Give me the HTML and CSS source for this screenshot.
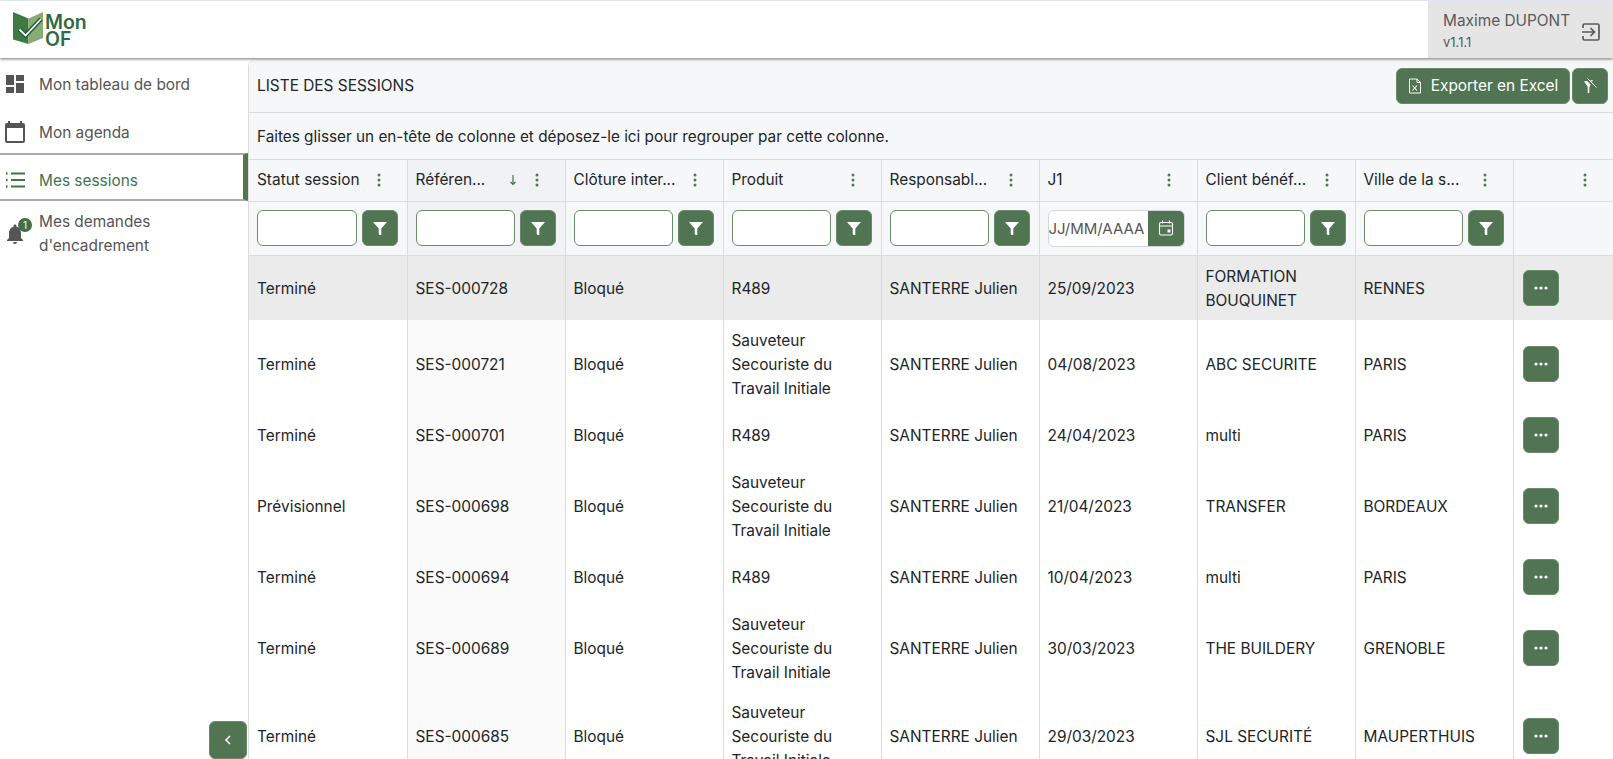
FILE: index.html
```html
<!DOCTYPE html>
<html lang="fr">
  <head>
    <meta charset="UTF-8" />
    <meta name="viewport" content="width=device-width, initial-scale=1.0" />
    <title>Mes sessions</title>
    <link rel="stylesheet" href="styles.css">
  </head>
  <body>

    <svg class="defs" aria-hidden="true">
      <symbol id="i-filter" viewBox="0 0 14 14"><path d="M0 1h14L8.3 7.4V14H6.6L5.7 13V7.4z" fill="currentColor"/></symbol>
      <symbol id="i-dots" viewBox="0 0 4 16"><circle cx="2" cy="3" r="1.5"/><circle cx="2" cy="8" r="1.5"/><circle cx="2" cy="13" r="1.5"/></symbol>
      <symbol id="i-more" viewBox="0 0 14 4"><circle cx="2" cy="2" r="1.6"/><circle cx="7" cy="2" r="1.6"/><circle cx="12" cy="2" r="1.6"/></symbol>
    </svg>

    <header class="topbar">
      <div class="logo">
        <svg width="32" height="34" viewBox="0 0 32 34">
          <path d="M1 0l15.500 6.500V32L1 27.500z" fill="#3f7a45"/>
          <path d="M16.500 6.500L31 0v26l-14.500 6z" fill="#86ab74"/>
          <path d="M7.500 17.500l6 6L29 7" fill="none" stroke="#1f5a33" stroke-width="4.500"/>
          <path d="M7.500 17.500l6 6L29 7" fill="none" stroke="#fff" stroke-width="1.800"/>
        </svg>
        <div class="logo-text">Mon<br>OF</div>
      </div>
      <div class="user">
        <div class="user-text">
          <div class="user-name">Maxime DUPONT</div>
          <div class="user-version">v1.1.1</div>
        </div>
        <svg class="logout" width="20" height="20" viewBox="0 0 20 20" fill="none" stroke="currentColor" stroke-width="1.700">
          <path d="M2 6V3.500A1.500 1.500 0 0 1 3.500 2h13A1.500 1.500 0 0 1 18 3.500v13a1.500 1.500 0 0 1-1.500 1.500h-13A1.500 1.500 0 0 1 2 16.500V14"/>
          <path d="M1 10h12M9.500 6l4 4-4 4"/>
        </svg>
      </div>
    </header>

    <div class="layout">
      <nav class="sidebar">
        <a class="nav-item">
          <svg class="nav-icon" viewBox="0 0 24 24"><path d="M3 13h8V3H3v10zm0 8h8v-6H3v6zm10 0h8V11h-8v10zm0-18v6h8V3h-8z"/></svg>
          <span class="nav-text">Mon tableau de bord</span>
        </a>
        <a class="nav-item">
          <svg class="nav-icon" viewBox="0 0 24 24"><path d="M20 3h-1V1h-2v2H7V1H5v2H4c-1.100 0-2 .9-2 2v16c0 1.100.9 2 2 2h16c1.100 0 2-.9 2-2V5c0-1.100-.9-2-2-2zm0 18H4V8h16v13z"/></svg>
          <span class="nav-text">Mon agenda</span>
        </a>
        <a class="nav-item active">
          <svg class="nav-icon" viewBox="0 0 24 24" fill="none" stroke="currentColor" stroke-width="1.800">
            <path d="M8 5.500h14M8 12h14M8 18.500h14"/>
            <path d="M3 5.500h1.500M3 12h1.500M3 18.500h1.500" stroke-width="2.400"/>
          </svg>
          <span class="nav-text">Mes sessions</span>
        </a>
        <a class="nav-item nav-bell">
          <span class="bell">
            <svg class="nav-icon" viewBox="0 0 24 24"><path d="M12 22c1.100 0 2-.9 2-2h-4c0 1.100.9 2 2 2zm6-6v-5c0-3.070-1.640-5.640-4.500-6.320V4c0-.83-.67-1.500-1.500-1.500s-1.500.67-1.500 1.500v.68C7.630 5.360 6 7.920 6 11v5l-2 2v1h16v-1l-2-2z"/></svg>
            <span class="badge">1</span>
          </span>
          <span class="nav-text">Mes demandes d'encadrement</span>
        </a>
        <button class="btn collapse" type="button">
          <svg width="10" height="12" viewBox="0 0 10 12" fill="none" stroke="currentColor" stroke-width="1.500"><path d="M7 2L3 6l4 4"/></svg>
        </button>
      </nav>

      <main class="content">
        <div class="titlebar">
          <span class="title">LISTE DES SESSIONS</span>
          <div class="actions">
            <button class="btn btn-export" type="button">
              <svg width="14" height="16" viewBox="0 0 14 16" fill="none" stroke="currentColor" stroke-width="1">
                <path d="M1.500 1h7.500l3.500 3.500v10.500h-11zM9 1v3.500h3.500"/>
                <path d="M4.500 7.500l4.500 5M9 7.500l-4.500 5" stroke-width="1.100"/>
              </svg>
              Exporter en Excel
            </button>
            <button class="btn btn-pin" type="button">
              <svg width="16" height="16" viewBox="0 0 16 16" fill="none">
                <path d="M2 3.500L11 2 6.800 10z" fill="currentColor"/>
                <path d="M6.500 8v7" stroke="currentColor" stroke-width="1.500"/>
                <path d="M3.500 -.5l10 10" stroke="#517553" stroke-width="2.600"/>
                <path d="M5.500 .5l9 9" stroke="currentColor" stroke-width="1"/>
              </svg>
            </button>
          </div>
        </div>
        <div class="dropzone">Faites glisser un en-tête de colonne et déposez-le ici pour regrouper par cette colonne.</div>

        <table class="grid">
          <colgroup>
            <col class="col"><col class="col"><col class="col"><col class="col"><col class="col"><col class="col"><col class="col"><col class="col"><col class="col-last">
          </colgroup>
          <thead>
            <tr class="head-row">
              <th><div class="th"><span class="label">Statut session</span><svg class="dots"><use href="#i-dots"/></svg></div></th>
              <th class="sorted"><div class="th"><span class="label">Référen...</span>
                <svg class="sort" width="10" height="14" viewBox="0 0 10 14" fill="none" stroke="currentColor" stroke-width="1.200"><path d="M5 2v9.500M2.500 9L5 11.500 7.500 9"/></svg>
                <svg class="dots"><use href="#i-dots"/></svg></div></th>
              <th><div class="th"><span class="label">Clôture inter...</span><svg class="dots"><use href="#i-dots"/></svg></div></th>
              <th><div class="th"><span class="label">Produit</span><svg class="dots"><use href="#i-dots"/></svg></div></th>
              <th><div class="th"><span class="label">Responsabl...</span><svg class="dots"><use href="#i-dots"/></svg></div></th>
              <th><div class="th"><span class="label">J1</span><svg class="dots"><use href="#i-dots"/></svg></div></th>
              <th><div class="th"><span class="label">Client bénéf...</span><svg class="dots"><use href="#i-dots"/></svg></div></th>
              <th><div class="th"><span class="label">Ville de la s...</span><svg class="dots"><use href="#i-dots"/></svg></div></th>
              <th><div class="th"><span class="label"></span><svg class="dots"><use href="#i-dots"/></svg></div></th>
            </tr>
            <tr class="filter-row">
              <th><div class="filter"><input type="text"><button class="btn btn-filter" type="button"><svg><use href="#i-filter"/></svg></button></div></th>
              <th class="sorted"><div class="filter"><input type="text"><button class="btn btn-filter" type="button"><svg><use href="#i-filter"/></svg></button></div></th>
              <th><div class="filter"><input type="text"><button class="btn btn-filter" type="button"><svg><use href="#i-filter"/></svg></button></div></th>
              <th><div class="filter"><input type="text"><button class="btn btn-filter" type="button"><svg><use href="#i-filter"/></svg></button></div></th>
              <th><div class="filter"><input type="text"><button class="btn btn-filter" type="button"><svg><use href="#i-filter"/></svg></button></div></th>
              <th>
                <div class="date-filter">
                  <input type="text" placeholder="JJ/MM/AAAA">
                  <button class="btn-date" type="button">
                    <svg width="16" height="16" viewBox="0 0 16 16" fill="none" stroke="currentColor" stroke-width="1.100">
                      <rect x="1.500" y="2.500" width="13" height="12.500" rx="1.500"/>
                      <path d="M1.500 6h13M4.500 .5v3M11.500 .5v3"/>
                      <rect x="9.500" y="9.500" width="3" height="3" fill="currentColor" stroke="none"/>
                    </svg>
                  </button>
                </div>
              </th>
              <th><div class="filter"><input type="text"><button class="btn btn-filter" type="button"><svg><use href="#i-filter"/></svg></button></div></th>
              <th><div class="filter"><input type="text"><button class="btn btn-filter" type="button"><svg><use href="#i-filter"/></svg></button></div></th>
              <th></th>
            </tr>
          </thead>
          <tbody>
            <tr class="selected">
              <td>Terminé</td><td class="sorted">SES-000728</td><td>Bloqué</td><td>R489</td><td>SANTERRE Julien</td><td>25/09/2023</td><td>FORMATION BOUQUINET</td><td>RENNES</td>
              <td><button class="btn btn-more" type="button"><svg><use href="#i-more"/></svg></button></td>
            </tr>
            <tr>
              <td>Terminé</td><td class="sorted">SES-000721</td><td>Bloqué</td><td>Sauveteur Secouriste du Travail Initiale</td><td>SANTERRE Julien</td><td>04/08/2023</td><td>ABC SECURITE</td><td>PARIS</td>
              <td><button class="btn btn-more" type="button"><svg><use href="#i-more"/></svg></button></td>
            </tr>
            <tr>
              <td>Terminé</td><td class="sorted">SES-000701</td><td>Bloqué</td><td>R489</td><td>SANTERRE Julien</td><td>24/04/2023</td><td>multi</td><td>PARIS</td>
              <td><button class="btn btn-more" type="button"><svg><use href="#i-more"/></svg></button></td>
            </tr>
            <tr>
              <td>Prévisionnel</td><td class="sorted">SES-000698</td><td>Bloqué</td><td>Sauveteur Secouriste du Travail Initiale</td><td>SANTERRE Julien</td><td>21/04/2023</td><td>TRANSFER</td><td>BORDEAUX</td>
              <td><button class="btn btn-more" type="button"><svg><use href="#i-more"/></svg></button></td>
            </tr>
            <tr>
              <td>Terminé</td><td class="sorted">SES-000694</td><td>Bloqué</td><td>R489</td><td>SANTERRE Julien</td><td>10/04/2023</td><td>multi</td><td>PARIS</td>
              <td><button class="btn btn-more" type="button"><svg><use href="#i-more"/></svg></button></td>
            </tr>
            <tr>
              <td>Terminé</td><td class="sorted">SES-000689</td><td>Bloqué</td><td>Sauveteur Secouriste du Travail Initiale</td><td>SANTERRE Julien</td><td>30/03/2023</td><td>THE BUILDERY</td><td>GRENOBLE</td>
              <td><button class="btn btn-more" type="button"><svg><use href="#i-more"/></svg></button></td>
            </tr>
            <tr>
              <td>Terminé</td><td class="sorted">SES-000685</td><td>Bloqué</td><td>Sauveteur Secouriste du Travail Initiale</td><td>SANTERRE Julien</td><td>29/03/2023</td><td>SJL SECURITÉ</td><td>MAUPERTHUIS</td>
              <td><button class="btn btn-more" type="button"><svg><use href="#i-more"/></svg></button></td>
            </tr>
          </tbody>
        </table>
      </main>
    </div>

  </body>
</html>
```

FILE: styles.css
```css
* {
  box-sizing: border-box;
}

html, body {
  height: 100%;
}

body {
  margin: 0;
  display: flex;
  flex-direction: column;
  height: 759px;
  overflow: hidden;
  font-family: Inter, "Liberation Sans", sans-serif;
  font-size: 15.4px;
  line-height: 24px;
  color: #212529;
  background: #fff;
}

.defs {
  display: none;
}

/* barre du haut */
.topbar {
  flex: none;
  display: flex;
  justify-content: space-between;
  height: 58px;
  border-top: 1px solid #e0e4ee;
  background: #fff;
  box-shadow: 0 1px 3px rgba(0, 0, 0, 0.55);
  position: relative;
  z-index: 2;
}

.logo {
  display: flex;
  align-items: center;
  gap: 1px;
  padding-left: 12px;
  padding-bottom: 2px;
}

.logo-text {
  margin-top: 4px;
  font-size: 19.5px;
  line-height: 17px;
  font-weight: 600;
  color: #2f6b42;
}

.user {
  width: 185px;
  display: flex;
  align-items: center;
  justify-content: space-between;
  padding: 0 12px 0 15px;
  background: #e5e5e5;
  color: #5a5a5a;
}

.user-name {
  line-height: 24px;
}

.user-version {
  font-size: 13px;
  line-height: 18px;
}

.logout {
  margin-top: 4px;
}

/* menu */
.layout {
  flex: 1;
  display: flex;
  min-height: 0;
}

.sidebar {
  flex: none;
  width: 248px;
  display: flex;
  flex-direction: column;
}

.nav-item {
  display: flex;
  align-items: flex-start;
  height: 48px;
  padding: 14px 0 10px 3px;
  color: #555;
}

.nav-text {
  margin-top: 1px;
}

.nav-item.active {
  margin-top: -1px;
  margin-bottom: 1px;
  padding-top: 13px;
  border-top: 2px solid #aaa;
  border-bottom: 2px solid #aaa;
  border-right: 5px solid #517553;
  color: #41744c;
}

.nav-icon {
  flex: none;
  width: 24px;
  height: 24px;
  margin-right: 12px;
  fill: #555;
}

.active .nav-icon {
  fill: none;
}

.nav-bell {
  height: auto;
  padding-top: 7px;
}

.bell {
  position: relative;
  margin-top: 13px;
  flex: none;
}

.badge {
  position: absolute;
  top: -4px;
  left: 15px;
  width: 14px;
  height: 14px;
  border-radius: 50%;
  background: #3f7048;
  color: #fff;
  font-size: 10px;
  line-height: 14px;
  text-align: center;
}

.nav-bell .nav-text {
  width: 150px;
}

.btn {
  display: inline-flex;
  align-items: center;
  justify-content: center;
  padding: 0;
  border: 1px solid #6b8a6c;
  border-radius: 6px;
  background: #517553;
  color: #fff;
  font-family: inherit;
}

.collapse {
  width: 38px;
  height: 38px;
  margin-top: auto;
  align-self: flex-end;
  margin-right: 1px;
}

/* contenu */
.content {
  flex: 1;
  min-width: 0;
  border-left: 1px solid #dcdcdc;
  margin-top: 1px;
  border-top-left-radius: 8px;
  overflow: hidden;
}

.titlebar {
  height: 54px;
  display: flex;
  align-items: center;
  justify-content: space-between;
  padding: 0 5px 0 8px;
  background: #f6f7f9;
  border-bottom: 1px solid #dcdcdc;
}

.actions {
  display: flex;
  gap: 2px;
}

.btn-export {
  width: 174px;
  height: 36px;
  gap: 9px;
  font-size: 15.4px;
}

.btn-pin {
  width: 36px;
  height: 36px;
}

.dropzone {
  height: 47px;
  padding: 12px 8px 10px;
  font-size: 15.3px;
  background: #f6f7f9;
  border-bottom: 1px solid #dcdcdc;
}

/* tableau */
.grid {
  table-layout: fixed;
  width: 1364px;
  border-collapse: collapse;
}

.col {
  width: 158px;
}

.col-last {
  width: 100px;
}

th, td {
  padding: 0 8px;
  border-right: 1px solid #dcdcdc;
  font-weight: 400;
  text-align: left;
}

th:last-child, td:last-child {
  border-right: none;
}

thead th {
  background: #f6f7f9;
  border-bottom: 1px solid #dcdcdc;
}

thead th.sorted {
  background: #f1f2f4;
}

.head-row th {
  height: 41px;
}

.filter-row th {
  height: 54px;
}

.th {
  display: flex;
  align-items: center;
  padding-right: 8px;
}

.label {
  flex: 1;
  white-space: nowrap;
}

.dots {
  flex: none;
  width: 4px;
  height: 16px;
  margin: 0 10px;
  fill: #4d7a55;
}

.sort {
  flex: none;
  margin-right: 7px;
  color: #41744c;
}

.filter {
  display: flex;
  gap: 5px;
  width: 140px;
}

th:first-child .filter {
  width: 141px;
}

.filter input {
  flex: 1;
  min-width: 0;
  height: 36px;
  border: 1px solid #6b8a6c;
  border-radius: 6px;
  background: #fff;
}

.btn-filter {
  flex: none;
  width: 36px;
  height: 36px;
}

.btn-filter svg {
  width: 14px;
  height: 14px;
}

.date-filter {
  display: flex;
  width: 137px;
  height: 37px;
  border: 1px solid #d4d7da;
  border-radius: 6px;
  overflow: hidden;
  background: #fff;
}

.date-filter input {
  flex: 1;
  min-width: 0;
  padding: 0;
  border: none;
  background: transparent;
  font-family: inherit;
  font-size: 15px;
}

.date-filter input::placeholder {
  color: #555;
  opacity: 1;
}

.btn-date {
  flex: none;
  width: 36px;
  padding: 0;
  border: none;
  background: #517553;
  color: #fff;
}

.btn-date svg {
  display: block;
  margin: 0 auto;
}

tbody td {
  height: 54px;
  padding-top: 9px;
  padding-bottom: 7px;
}

tbody td.sorted {
  background: #fafafa;
}

tbody tr.selected td {
  background: #ebebeb;
}

.btn-more {
  display: flex;
  width: 36px;
  height: 36px;
  margin: -1px auto 1px 1px;
}

.btn-more svg {
  width: 14px;
  height: 4px;
  fill: #fff;
}
```
